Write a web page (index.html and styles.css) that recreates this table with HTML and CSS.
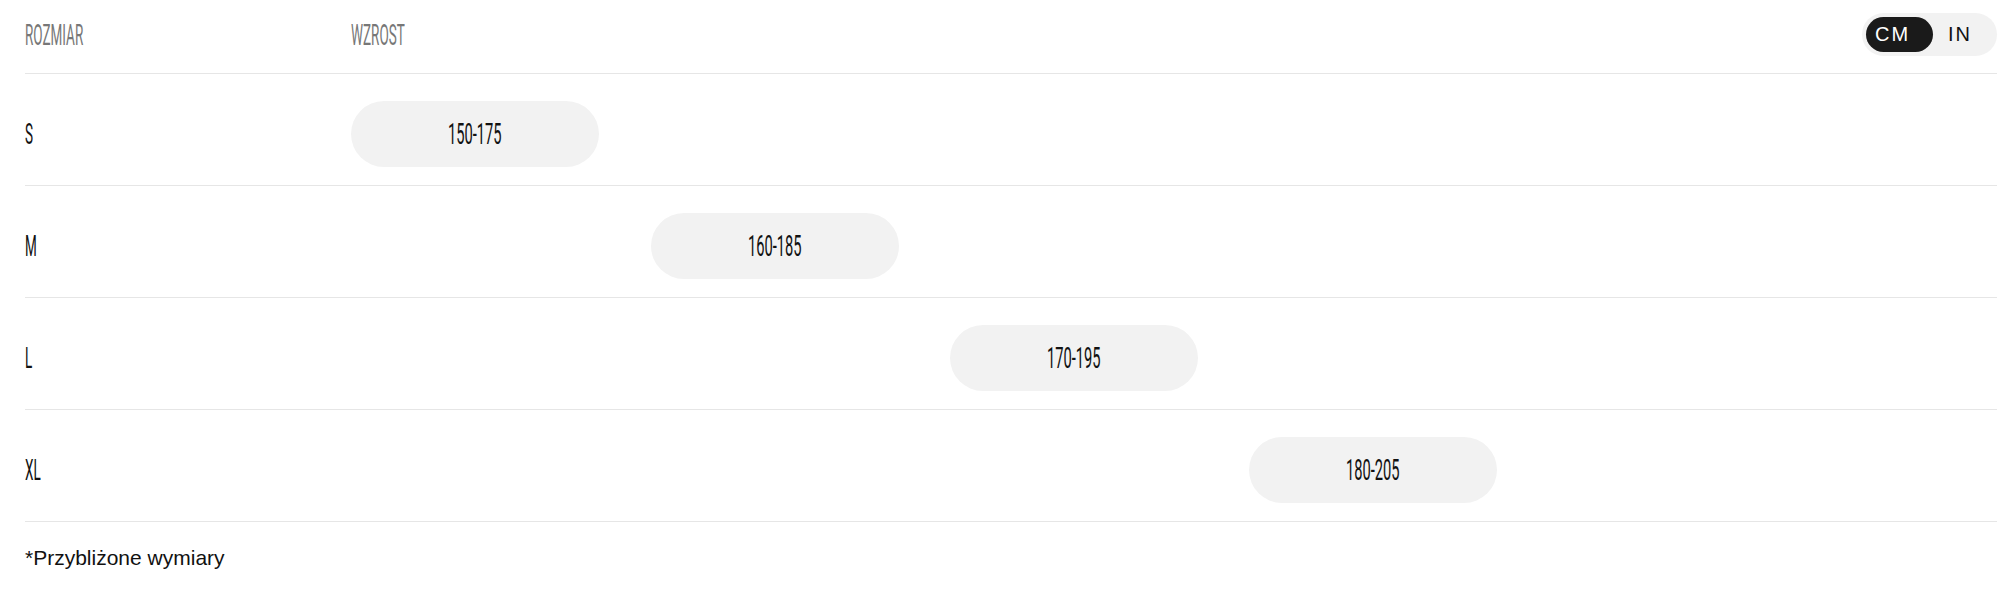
FILE: index.html
```html
<!DOCTYPE html>
<html lang="pl">
<head>
<meta charset="utf-8">
<title>Tabela rozmiarów</title>
<link rel="stylesheet" href="styles.css">
</head>
<body>
<div class="chart">
  <div class="head">
    <div class="col-label"><span class="cond cond-gray">ROZMIAR</span></div>
    <div class="col-track"><span class="cond cond-gray">WZROST</span></div>
    <div class="toggle">
      <span class="unit unit-active">CM</span>
      <span class="unit">IN</span>
    </div>
  </div>
  <div class="row">
    <div class="col-label"><span class="cond">S</span></div>
    <div class="col-track"><div class="pill" style="margin-left:0px"><span class="cond cond-num">150-175</span></div></div>
  </div>
  <div class="row">
    <div class="col-label"><span class="cond">M</span></div>
    <div class="col-track"><div class="pill" style="margin-left:300px"><span class="cond cond-num">160-185</span></div></div>
  </div>
  <div class="row">
    <div class="col-label"><span class="cond">L</span></div>
    <div class="col-track"><div class="pill" style="margin-left:599px"><span class="cond cond-num">170-195</span></div></div>
  </div>
  <div class="row">
    <div class="col-label"><span class="cond">XL</span></div>
    <div class="col-track"><div class="pill" style="margin-left:898px"><span class="cond cond-num">180-205</span></div></div>
  </div>
  <p class="note">*Przybliżone wymiary</p>
</div>
</body>
</html>
```
FILE: styles.css
```css
html, body {
  margin: 0;
  padding: 0;
  background: #ffffff;
}
body {
  font-family: "Liberation Sans", Arial, sans-serif;
  color: #111111;
}
.chart {
  margin: 0 8px 0 25px;
}
.head {
  display: flex;
  align-items: center;
  height: 69px;
  padding-bottom: 4px;
  border-bottom: 1px solid #e6e6e6;
}
.row {
  display: flex;
  align-items: center;
  padding: 27px 0 18px;
  border-bottom: 1px solid #e6e6e6;
}
.col-label {
  width: 326px;
  flex: none;
  height: 30px;
}
.col-track {
  flex: 1;
  display: flex;
  align-items: center;
}
.head .col-track {
  flex: 1;
  height: 30px;
}
.cond {
  display: inline-block;
  font-family: Roboto, "Liberation Sans", sans-serif;
  font-size: 30px;
  font-weight: 400;
  line-height: 30px;
  color: #111111;
  transform: scaleX(0.45);
  transform-origin: left center;
  white-space: nowrap;
}
.cond-gray {
  color: #777777;
  transform: scaleX(0.45);
}
.pill {
  width: 248px;
  height: 66px;
  border-radius: 33px;
  background: #f2f2f2;
  display: flex;
  align-items: center;
  justify-content: center;
  flex: none;
}
.cond-num {
  transform: scaleX(0.49);
  transform-origin: center center;
  line-height: 30px;
}
.toggle {
  flex: none;
  display: flex;
  align-items: center;
  width: 127px;
  height: 35px;
  padding: 4px;
  border-radius: 22px;
  background: #f2f2f2;
}
.unit {
  font-size: 20px;
  letter-spacing: 2px;
  line-height: 35px;
  height: 35px;
  color: #111111;
  box-sizing: border-box;
}
.unit-active {
  width: 67px;
  padding-left: 9px;
  border-radius: 18px;
  background: #1a1a1a;
  color: #ffffff;
}
.unit:not(.unit-active) {
  padding-left: 15px;
}
.note {
  margin: 0;
  padding-top: 24px;
  font-size: 21px;
  line-height: 24px;
  color: #111111;
}
```
